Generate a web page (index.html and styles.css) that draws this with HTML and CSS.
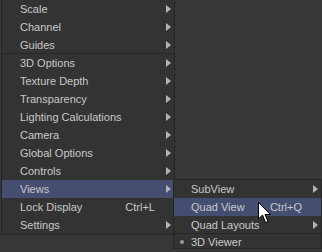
FILE: index.html
```html
<!DOCTYPE html>
<html lang="en">
<head>
  <meta charset="UTF-8" />
  <title>Viewer menu</title>
  <link rel="stylesheet" href="styles.css">
</head>
<body>
  <div class="menus">
    <div class="menu main-menu">
      <div class="item"><span class="label">Scale</span><span class="slot"><i class="arrow"></i></span></div>
      <div class="item"><span class="label">Channel</span><span class="slot"><i class="arrow"></i></span></div>
      <div class="item sep"><span class="label">Guides</span><span class="slot"><i class="arrow"></i></span></div>
      <div class="item"><span class="label">3D Options</span><span class="slot"><i class="arrow"></i></span></div>
      <div class="item"><span class="label">Texture Depth</span><span class="slot"><i class="arrow"></i></span></div>
      <div class="item"><span class="label">Transparency</span><span class="slot"><i class="arrow"></i></span></div>
      <div class="item"><span class="label">Lighting Calculations</span><span class="slot"><i class="arrow"></i></span></div>
      <div class="item"><span class="label">Camera</span><span class="slot"><i class="arrow"></i></span></div>
      <div class="item"><span class="label">Global Options</span><span class="slot"><i class="arrow"></i></span></div>
      <div class="item"><span class="label">Controls</span><span class="slot"><i class="arrow"></i></span></div>
      <div class="item active"><span class="label">Views</span><span class="slot"><i class="arrow"></i></span></div>
      <div class="item"><span class="label">Lock Display</span><span class="key">Ctrl+L</span><span class="slot"></span></div>
      <div class="item"><span class="label">Settings</span><span class="slot"><i class="arrow"></i></span></div>
    </div>

    <div class="menu sub-menu">
      <div class="item"><span class="label">SubView</span><span class="slot"><i class="arrow"></i></span></div>
      <div class="item active"><span class="label">Quad View</span><span class="key">Ctrl+Q</span><span class="slot"></span></div>
      <div class="item sep"><span class="label">Quad Layouts</span><span class="slot"><i class="arrow"></i></span></div>
      <div class="item last"><i class="dot"></i><span class="label">3D Viewer</span><span class="slot"></span></div>
    </div>
  </div>

  <svg class="cursor" width="14" height="22" viewBox="0 0 14 22">
    <path d="M0.5 0.5 L0.5 17 L4.5 13 L7.5 20.5 L10 19.5 L7 12.5 L12.5 12.5 Z" fill="#fff" stroke="#000" stroke-width="1" />
  </svg>
</body>
</html>
```

FILE: styles.css
```css
html, body {
  margin: 0;
  padding: 0;
  height: 100%;
  overflow: hidden;
  background-color: #373737;
  font-family: "Liberation Sans", Arial, sans-serif;
  font-size: 11px;
  color: #c9c9c9;
}

.menus {
  display: flex;
  align-items: flex-start;
}

.menu {
  background: #333333;
  border: 1px solid #262626;
  box-sizing: border-box;
}

.main-menu {
  width: 176px;
  margin-left: 1px;
  margin-top: -1px;
}

.sub-menu {
  position: relative;
  width: 149px;
  margin-left: -2px;
  margin-top: 179px;
  flex-shrink: 0;
}

.item {
  display: flex;
  align-items: center;
  height: 18px;
  box-sizing: border-box;
  padding-right: 3px;
  white-space: nowrap;
}

.main-menu .item {
  padding-left: 18px;
}

.sub-menu .item {
  padding-left: 17px;
  padding-right: 3px;
}

.item.active {
  background: #454e70;
}

.item.sep {
  border-bottom: 1px solid #282828;
}

.item.last {
  height: 14px;
  align-items: flex-start;
  padding-top: 2px;
  position: relative;
}

.label {
  flex: 1;
}

.key {
  margin-left: 8px;
}

.slot {
  width: 16px;
  display: flex;
  justify-content: flex-end;
}

.arrow {
  display: block;
  width: 0;
  height: 0;
  border-left: 5px solid #b4b4b4;
  border-top: 4px solid transparent;
  border-bottom: 4px solid transparent;
}

.dot {
  position: absolute;
  left: 6px;
  top: 6px;
  width: 4px;
  height: 4px;
  border-radius: 50%;
  background: #9a9a9a;
}

.cursor {
  position: absolute;
  left: 258px;
  top: 202px;
}
```
